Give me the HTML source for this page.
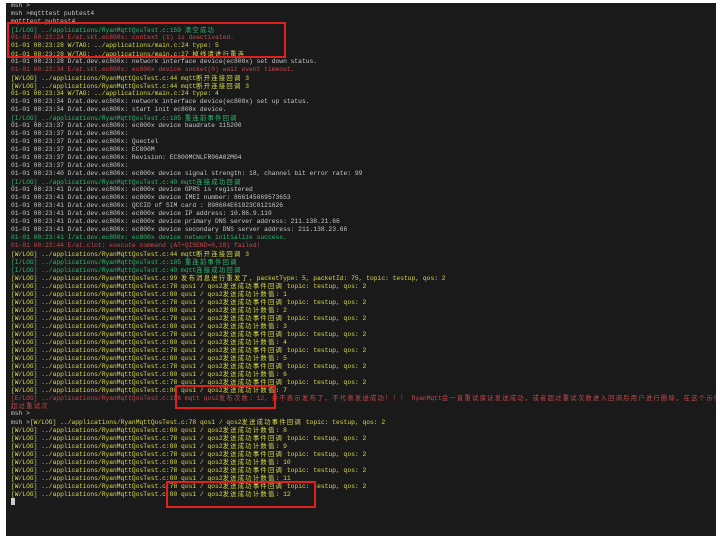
<!DOCTYPE html>
<html><head><meta charset="utf-8"><style>
html,body{margin:0;padding:0;background:#fff;width:720px;height:542px;overflow:hidden}
#t{position:absolute;left:6px;top:3px;width:710px;height:533px;background:#1a1a1a;overflow:hidden}
#l{position:absolute;left:5px;top:-1px;font-family:"Liberation Mono","Noto Sans CJK SC",monospace;font-size:6.3px;line-height:8px;color:#c8c8c8}
#l div{height:8px;white-space:pre}
.c{letter-spacing:1.26px;font-family:"Noto Sans CJK SC",sans-serif}
.g{color:#2fb872}.r{color:#c8474a}.y{color:#d9d94e}
.box{position:absolute;border:2px solid #e0201c;box-sizing:border-box}
.cur{display:inline-block;width:4px;height:7px;background:#ccc;vertical-align:top}
</style></head><body>
<div id="t"><div id="l">
<div>msh &gt;</div>
<div>msh &gt;mqtttest pubtest4</div>
<div>mqtttest pubtest4</div>
<div class="g">[I/LOG] ../applications/RyanMqttQosTest.c:159 <span class="c">清空成功</span></div>
<div class="r">01-01 08:23:24 E/at.skt.ec800x: context (1) is deactivated.</div>
<div class="y">01-01 08:23:28 W/TAG: ../applications/main.c:24 type: 5</div>
<div class="y">01-01 08:23:28 W/TAG: ../applications/main.c:27 <span class="c">掉线请进行重连</span></div>
<div>01-01 08:23:28 D/at.dev.ec800x: network interface device(ec800x) set down status.</div>
<div class="r">01-01 08:23:34 E/at.skt.ec800x: ec800x device socket(0) wait event timeout.</div>
<div class="y">[W/LOG] ../applications/RyanMqttQosTest.c:44 mqtt<span class="c">断开连接回调</span> 3</div>
<div class="y">[W/LOG] ../applications/RyanMqttQosTest.c:44 mqtt<span class="c">断开连接回调</span> 3</div>
<div class="y">01-01 08:23:34 W/TAG: ../applications/main.c:24 type: 4</div>
<div>01-01 08:23:34 D/at.dev.ec800x: network interface device(ec800x) set up status.</div>
<div>01-01 08:23:34 D/at.dev.ec800x: start init ec800x device.</div>
<div class="g">[I/LOG] ../applications/RyanMqttQosTest.c:105 <span class="c">重连前事件回调</span></div>
<div>01-01 08:23:37 D/at.dev.ec800x: ec800x device baudrate 115200</div>
<div>01-01 08:23:37 D/at.dev.ec800x:</div>
<div>01-01 08:23:37 D/at.dev.ec800x: Quectel</div>
<div>01-01 08:23:37 D/at.dev.ec800x: EC800M</div>
<div>01-01 08:23:37 D/at.dev.ec800x: Revision: EC800MCNLFR06A02M04</div>
<div>01-01 08:23:37 D/at.dev.ec800x:</div>
<div>01-01 08:23:40 D/at.dev.ec800x: ec800x device signal strength: 18, channel bit error rate: 99</div>
<div class="g">[I/LOG] ../applications/RyanMqttQosTest.c:40 mqtt<span class="c">连接成功回调</span></div>
<div>01-01 08:23:41 D/at.dev.ec800x: ec800x device GPRS is registered</div>
<div>01-01 08:23:41 D/at.dev.ec800x: ec800x device IMEI number: 866145069573653</div>
<div>01-01 08:23:41 D/at.dev.ec800x: QCCID of SIM card : 898604E61923C0121626</div>
<div>01-01 08:23:41 D/at.dev.ec800x: ec800x device IP address: 10.86.9.110</div>
<div>01-01 08:23:41 D/at.dev.ec800x: ec800x device primary DNS server address: 211.138.21.66</div>
<div>01-01 08:23:41 D/at.dev.ec800x: ec800x device secondary DNS server address: 211.138.23.66</div>
<div class="g">01-01 08:23:41 I/at.dev.ec800x: ec800x device network initialize success.</div>
<div class="r">01-01 08:23:44 E/at.clnt: execute command (AT+QISEND=0,18) failed!</div>
<div class="y">[W/LOG] ../applications/RyanMqttQosTest.c:44 mqtt<span class="c">断开连接回调</span> 3</div>
<div class="g">[I/LOG] ../applications/RyanMqttQosTest.c:105 <span class="c">重连前事件回调</span></div>
<div class="g">[I/LOG] ../applications/RyanMqttQosTest.c:40 mqtt<span class="c">连接成功回调</span></div>
<div class="y">[W/LOG] ../applications/RyanMqttQosTest.c:99 <span class="c">发布消息进行重发了</span>, packetType: 5, packetId: 75, topic: testup, qos: 2</div>
<div class="y">[W/LOG] ../applications/RyanMqttQosTest.c:78 qos1 / qos2<span class="c">发送成功事件回调</span> topic: testup, qos: 2</div>
<div class="y">[W/LOG] ../applications/RyanMqttQosTest.c:80 qos1 / qos2<span class="c">发送成功计数值</span>: 1</div>
<div class="y">[W/LOG] ../applications/RyanMqttQosTest.c:78 qos1 / qos2<span class="c">发送成功事件回调</span> topic: testup, qos: 2</div>
<div class="y">[W/LOG] ../applications/RyanMqttQosTest.c:80 qos1 / qos2<span class="c">发送成功计数值</span>: 2</div>
<div class="y">[W/LOG] ../applications/RyanMqttQosTest.c:78 qos1 / qos2<span class="c">发送成功事件回调</span> topic: testup, qos: 2</div>
<div class="y">[W/LOG] ../applications/RyanMqttQosTest.c:80 qos1 / qos2<span class="c">发送成功计数值</span>: 3</div>
<div class="y">[W/LOG] ../applications/RyanMqttQosTest.c:78 qos1 / qos2<span class="c">发送成功事件回调</span> topic: testup, qos: 2</div>
<div class="y">[W/LOG] ../applications/RyanMqttQosTest.c:80 qos1 / qos2<span class="c">发送成功计数值</span>: 4</div>
<div class="y">[W/LOG] ../applications/RyanMqttQosTest.c:78 qos1 / qos2<span class="c">发送成功事件回调</span> topic: testup, qos: 2</div>
<div class="y">[W/LOG] ../applications/RyanMqttQosTest.c:80 qos1 / qos2<span class="c">发送成功计数值</span>: 5</div>
<div class="y">[W/LOG] ../applications/RyanMqttQosTest.c:78 qos1 / qos2<span class="c">发送成功事件回调</span> topic: testup, qos: 2</div>
<div class="y">[W/LOG] ../applications/RyanMqttQosTest.c:80 qos1 / qos2<span class="c">发送成功计数值</span>: 6</div>
<div class="y">[W/LOG] ../applications/RyanMqttQosTest.c:78 qos1 / qos2<span class="c">发送成功事件回调</span> topic: testup, qos: 2</div>
<div class="y">[W/LOG] ../applications/RyanMqttQosTest.c:80 qos1 / qos2<span class="c">发送成功计数值</span>: 7</div>
<div class="r">[E/LOG] ../applications/RyanMqttQosTest.c:156 mqtt qos2<span class="c">发布次数</span>: 12, <span class="c">并不表示发布了，不代表发送成功！！！</span> RyanMqtt<span class="c">会一直重试保证发送成功，或者超过重试次数进入回调后用户进行删除，在这个示例中</span></div>
<div class="r"><span class="c">超过重试次</span></div>
<div>msh &gt;</div>
<div>msh &gt;<span class="y">[W/LOG] ../applications/RyanMqttQosTest.c:78 qos1 / qos2<span class="c">发送成功事件回调</span> topic: testup, qos: 2</span></div>
<div class="y">[W/LOG] ../applications/RyanMqttQosTest.c:80 qos1 / qos2<span class="c">发送成功计数值</span>: 8</div>
<div class="y">[W/LOG] ../applications/RyanMqttQosTest.c:78 qos1 / qos2<span class="c">发送成功事件回调</span> topic: testup, qos: 2</div>
<div class="y">[W/LOG] ../applications/RyanMqttQosTest.c:80 qos1 / qos2<span class="c">发送成功计数值</span>: 9</div>
<div class="y">[W/LOG] ../applications/RyanMqttQosTest.c:78 qos1 / qos2<span class="c">发送成功事件回调</span> topic: testup, qos: 2</div>
<div class="y">[W/LOG] ../applications/RyanMqttQosTest.c:80 qos1 / qos2<span class="c">发送成功计数值</span>: 10</div>
<div class="y">[W/LOG] ../applications/RyanMqttQosTest.c:78 qos1 / qos2<span class="c">发送成功事件回调</span> topic: testup, qos: 2</div>
<div class="y">[W/LOG] ../applications/RyanMqttQosTest.c:80 qos1 / qos2<span class="c">发送成功计数值</span>: 11</div>
<div class="y">[W/LOG] ../applications/RyanMqttQosTest.c:78 qos1 / qos2<span class="c">发送成功事件回调</span> topic: testup, qos: 2</div>
<div class="y">[W/LOG] ../applications/RyanMqttQosTest.c:80 qos1 / qos2<span class="c">发送成功计数值</span>: 12</div>
<div><span class="cur"></span></div>
</div></div>
<div class="box" style="left:7px;top:22px;width:279px;height:36px"></div>
<div class="box" style="left:175px;top:385px;width:101px;height:24px"></div>
<div class="box" style="left:166px;top:481px;width:150px;height:27px"></div>
</body></html>
